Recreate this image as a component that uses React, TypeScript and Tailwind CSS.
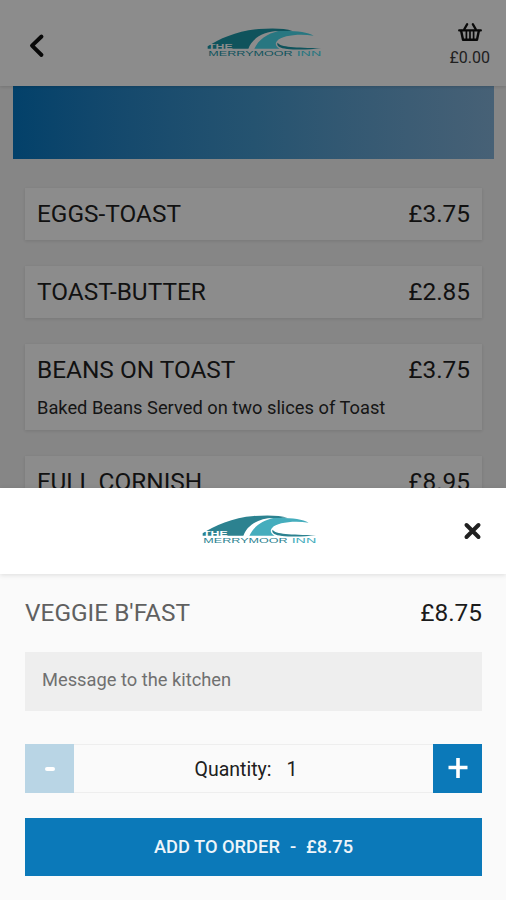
import React from "react";

type LogoProps = { className: string; deep: string; light: string; gap: string };

function Logo({ className, deep, light, gap }: LogoProps) {
  return (
    <svg className={className} width="120" height="34" viewBox="30 40 360 102" role="img" aria-label="The Merrymoor Inn">
      <path d="M38 101 C72 79 128 53 192 49 C232 46 270 47 292 54 C250 54 199 64 176 90 L165 108 L38 108 Z" fill={deep} />
      <path d="M173 108 C181 80 210 55 256 55 C302 54 337 58 356 69 C309 62 260 69 247 84 C238 94 243 101 254 108 Z" fill={light} />
      <path d="M248 90 C256 104 301 104 378 107 C330 113 267 112 253 103 C247 98 245 94 248 90 Z" fill={deep} />
      <path d="M160 109 C169 79 204 55 251 55 C216 63 190 81 178 109 Z" fill={gap} />
      <text x="39" y="109" textLength="74" lengthAdjust="spacingAndGlyphs" fontFamily="Liberation Sans, sans-serif" fontSize="20" fontWeight="700" fill={gap}>THE</text>
      <text x="40" y="130" textLength="253" lengthAdjust="spacingAndGlyphs" fontFamily="Liberation Sans, sans-serif" fontSize="21" fill={deep}>MERRYMOOR</text>
      <text x="305" y="130" textLength="74" lengthAdjust="spacingAndGlyphs" fontFamily="Liberation Sans, sans-serif" fontSize="21" fill={light}>INN</text>
    </svg>
  );
}

function Basket() {
  return (
    <svg className="mr-[10px]" width="24" height="20" viewBox="0 0 24 20" fill="none" stroke="#090909" strokeLinecap="round" strokeLinejoin="round">
      <path d="M9.2 2.1 L6.2 7.4 M14.8 2.1 L17.8 7.4" strokeWidth="2.2" />
      <path d="M1.2 8.4 H22.8" strokeWidth="2.3" />
      <path d="M3.2 9 L5 17.8 H19 L20.8 9" strokeWidth="2.4" />
      <path d="M8.4 9.5 V17 M12 9.5 V17 M15.6 9.5 V17" strokeWidth="1.7" />
    </svg>
  );
}

type Item = { name: string; price: string; note?: string };

const items: Item[] = [
  { name: "EGGS-TOAST", price: "£3.75" },
  { name: "TOAST-BUTTER", price: "£2.85" },
  { name: "BEANS ON TOAST", price: "£3.75", note: "Baked Beans Served on two slices of Toast" },
  { name: "FULL CORNISH", price: "£8.95" },
];

function MenuCard({ name, price, note }: Item) {
  return (
    <li className="shrink-0 bg-[#8c8c8c] px-3 pt-3 pb-3 shadow-[0_1px_3px_rgba(0,0,0,0.11)]">
      <div className="flex justify-between text-[24.4px] leading-7 text-[#111111]">
        <span>{name}</span>
        <span>{price}</span>
      </div>
      {note && <p className="mt-3 -mb-0.5 text-[18.3px] leading-6 text-[#151515]">{note}</p>}
    </li>
  );
}

export default function App() {
  return (
    <div className="flex h-[900px] w-[506px] flex-col overflow-hidden bg-[#868686] font-['Roboto',sans-serif]">
      <div className="flex h-[488px] shrink-0 flex-col overflow-hidden">
        <header className="z-10 flex h-[86px] shrink-0 items-start justify-between bg-[#8c8c8c] shadow-[0_1px_3px_rgba(0,0,0,0.14)]">
          <button aria-label="Back" className="mt-[33px] ml-[28px] w-[88px]">
            <svg width="18" height="26" viewBox="0 0 18 26" fill="none" stroke="#080808" strokeWidth="3.9" strokeLinecap="round" strokeLinejoin="round">
              <path d="M13.5 3.5 L4 12.7 L13.5 22" />
            </svg>
          </button>
          <Logo className="mt-[26px] ml-[10px]" deep="#0f535c" light="#287781" gap="#8c8c8c" />
          <div className="mt-[22px] mr-[14px] flex w-[88px] flex-col items-end">
            <Basket />
            <span className="mt-[5px] mr-[2px] text-base leading-[21px] text-[#202020]">£0.00</span>
          </div>
        </header>
        <div className="mr-3 ml-[13px] h-[73px] shrink-0 bg-linear-to-r from-[#03416a] via-[#255370] to-[#476176]" />
        <ul className="mt-[29px] mr-6 ml-[25px] flex flex-col gap-[26px]">
          {items.map((item) => (
            <MenuCard key={item.name} {...item} />
          ))}
        </ul>
      </div>

      <section className="flex flex-1 flex-col bg-[#fafafa]">
        <header className="flex h-[86px] items-start justify-between bg-white shadow-[0_1px_5px_rgba(0,0,0,0.12)]">
          <div className="w-[84px]" />
          <Logo className="mt-[25px] ml-[62px]" deep="#2c8290" light="#45adbd" gap="#ffffff" />
          <button aria-label="Close" className="mt-[32px] mr-[22px] flex w-[110px] justify-end">
            <svg width="24" height="24" viewBox="0 0 24 24" fill="none" stroke="#202020" strokeWidth="4" strokeLinecap="round">
              <path d="M6.5 5 L18.5 17 M18.5 5 L6.5 17" />
            </svg>
          </button>
        </header>
        <div className="flex flex-col pt-[24px] pr-6 pl-[25px]">
          <div className="flex justify-between text-[24.4px] leading-[30px]">
            <h2 className="text-[#606060]">VEGGIE B'FAST</h2>
            <span className="text-[#1b1b1b]">£8.75</span>
          </div>
          <div className="mt-[24px] h-[59px] bg-[#eeeeee] px-[17px] pt-[14px] text-[18.3px] leading-7 text-[#707070]">
            Message to the kitchen
          </div>
          <div className="mt-[33px] flex h-[49px]">
            <button aria-label="Decrease" className="flex w-[49px] items-center justify-center bg-[#b9d5e5]">
              <span className="h-[4px] w-[10px] rounded-xs bg-white" />
            </button>
            <div className="flex flex-1 items-center justify-center gap-[15px] border-y border-[#eeeeee] pt-0.5 pr-[15px] text-[19.5px] text-[#202020]">
              <span>Quantity:</span>
              <span>1</span>
            </div>
            <button aria-label="Increase" className="flex w-[49px] items-center justify-center bg-[#0b79b9]">
              <svg width="20" height="22" viewBox="0 0 20 22" fill="none" stroke="#ffffff" strokeWidth="3.6">
                <path d="M0.5 9.5 H19.5 M10 0 V20" />
              </svg>
            </button>
          </div>
          <button className="mt-[25px] flex h-[58px] items-center justify-center gap-2.5 bg-[#0b79b9] text-[18.3px] font-medium text-[#eef5fa]">
            <span>ADD TO ORDER</span>
            <span>-</span>
            <span>£8.75</span>
          </button>
        </div>
      </section>
    </div>
  );
}
